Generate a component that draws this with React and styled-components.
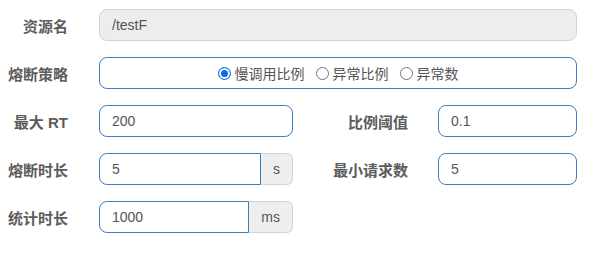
import React from 'react'
import styled, { createGlobalStyle } from 'styled-components'

const GlobalStyle = createGlobalStyle`
  html, body {
    margin: 0;
    padding: 0;
    background: #fff;
    font-family: "Liberation Sans", "Noto Sans CJK SC", sans-serif;
  }
`

const Form = styled.div`
  display: grid;
  grid-template-columns: 99px 194px 145px 139px;
  row-gap: 16px;
  padding-top: 9px;
  width: 577px;
`

const Label = styled.label`
  display: flex;
  align-items: center;
  justify-content: flex-end;
  height: 32px;
  padding-right: ${p => p.$pad || 31}px;
  font-size: 15px;
  font-weight: bold;
  color: #5c5c5c;
  white-space: nowrap;
  font-family: "Liberation Sans", "Noto Sans CJK SC", sans-serif;
`

const Input = styled.div`
  display: flex;
  align-items: center;
  height: 32px;
  box-sizing: border-box;
  padding: 0 12px;
  font-size: 14px;
  color: #555;
  border: 1px solid ${p => (p.$disabled ? '#d4d4d4' : '#3b7dc2')};
  background: ${p => (p.$disabled ? '#ededed' : '#fff')};
  border-radius: ${p => (p.$grouped ? '8px 0 0 8px' : '8px')};
  flex: 1;
  min-width: 0;
  grid-column: ${p => p.$span || 'auto'};
`

const Group = styled.div`
  display: flex;
  height: 32px;
`

const Addon = styled.span`
  display: flex;
  align-items: center;
  justify-content: center;
  padding: 0 12px;
  font-size: 14px;
  color: #555;
  background: #eee;
  border: 1px solid #d4d4d4;
  border-left: none;
  border-radius: 0 6px 6px 0;
`

const RadioBox = styled(Input)`
  justify-content: center;
  gap: 11px;
`

const Option = styled.span`
  display: flex;
  align-items: center;
  gap: 4px;
  font-size: 14px;
  color: #555;
  font-family: "Noto Sans CJK SC", sans-serif;
`

const Dot = styled.span`
  width: 13px;
  height: 13px;
  box-sizing: border-box;
  border-radius: 50%;
  border: 1px solid ${p => (p.$on ? '#0b6fe8' : '#767676')};
  background: ${p => (p.$on ? '#0b6fe8' : '#fff')};
  box-shadow: ${p => (p.$on ? 'inset 0 0 0 2px #fff' : 'none')};
  flex: none;
`

const Radio = ({ on, children }) => (
  <Option>
    <Dot $on={on} />
    {children}
  </Option>
)

export default function App() {
  return (
    <>
      <GlobalStyle />
      <Form>
        <Label>资源名</Label>
        <Input $disabled $span="2 / 5">/testF</Input>

        <Label>熔断策略</Label>
        <RadioBox $span="2 / 5">
          <Radio on>慢调用比例</Radio>
          <Radio>异常比例</Radio>
          <Radio>异常数</Radio>
        </RadioBox>

        <Label>最大 RT</Label>
        <Input>200</Input>
        <Label $pad={30}>比例阈值</Label>
        <Input>0.1</Input>

        <Label>熔断时长</Label>
        <Group>
          <Input $grouped>5</Input>
          <Addon>s</Addon>
        </Group>
        <Label $pad={30}>最小请求数</Label>
        <Input>5</Input>

        <Label>统计时长</Label>
        <Group>
          <Input $grouped>1000</Input>
          <Addon>ms</Addon>
        </Group>
      </Form>
    </>
  )
}
